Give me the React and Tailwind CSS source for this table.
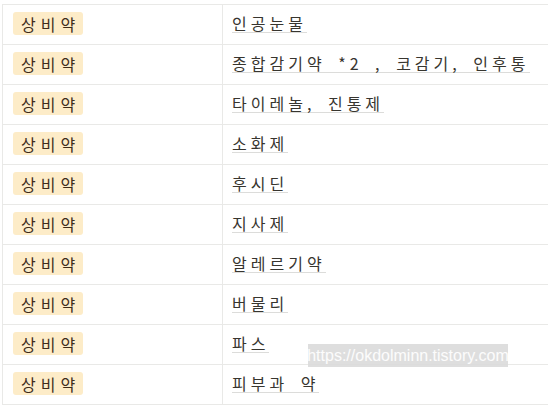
const rows = [
  '인공눈물',
  '종합감기약 *2 , 코감기, 인후통',
  '타이레놀, 진통제',
  '소화제',
  '후시딘',
  '지사제',
  '알레르기약',
  '버물리',
  '파스',
  '피부과 약',
];

function Badge() {
  return (
    <span className="flex h-[23px] w-[70px] items-center rounded-[3px] bg-[#fdecc8] pl-[8px] text-[16px] leading-none tracking-[5px] text-[#402c1b]">
      상비약
    </span>
  );
}

export default function App() {
  return (
    <div
      className="relative h-[407px] w-[548px] overflow-hidden bg-white pt-[4px] pl-[2px]"
      style={{ fontFamily: '"Noto Sans CJK KR", "Noto Sans", sans-serif' }}
    >
      <div className="w-[700px] border-t border-l border-[#e9e9e7]">
        {rows.map((name, i) => (
          <div key={i} className="flex h-[40px] border-b border-[#e9e9e7]">
            <div className="flex w-[220px] shrink-0 items-start border-r border-[#e9e9e7] pt-[7px] pl-[10px]">
              <Badge />
            </div>
            <div className="flex flex-1 items-start pt-[9px] pl-[9px]">
              <span className="border-b border-[#dcdcda] text-[16px] leading-[18px] tracking-[4px] [word-spacing:5px] text-[#37352f]">
                {name}
              </span>
            </div>
          </div>
        ))}
      </div>

      <div
        className="absolute top-[344px] left-[308px] flex h-[23px] w-[200px] items-center justify-center bg-[#dadada]/90 text-[16px] text-white/90"
        style={{ fontFamily: '"Liberation Sans", Arial, sans-serif' }}
      >
        https://okdolminn.tistory.com
      </div>
    </div>
  );
}
